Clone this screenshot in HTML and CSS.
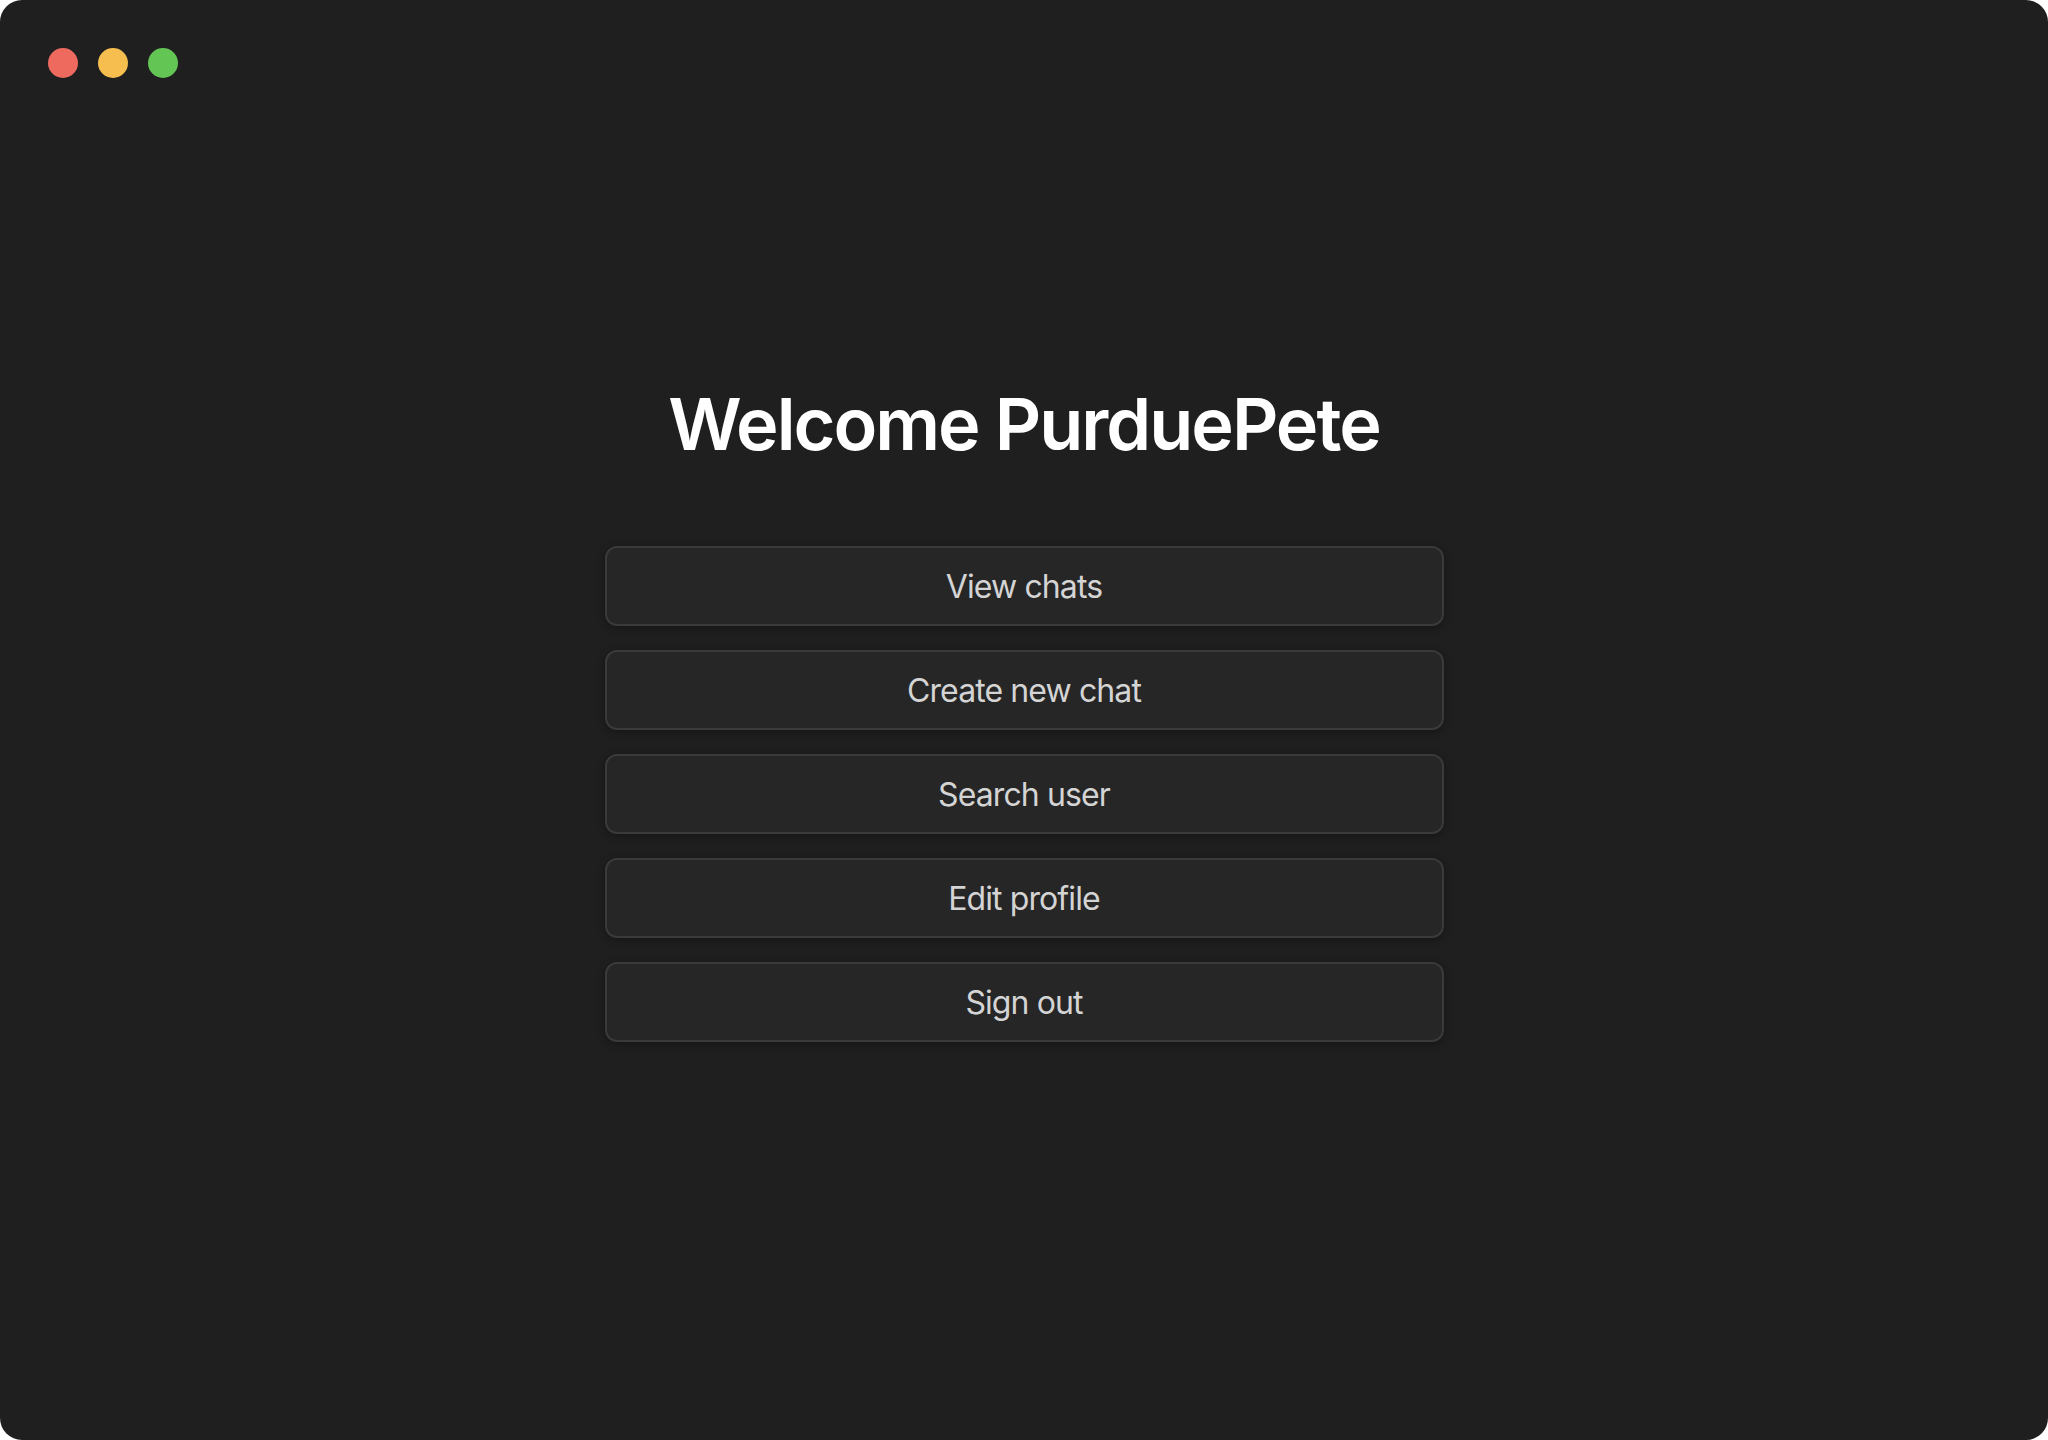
FILE: index.html
```html
<!DOCTYPE html>
<html>
<head>
<meta charset="utf-8">
<link rel="stylesheet" href="styles.css">
</head>
<body>
<div class="window">
  <div class="titlebar">
    <span class="light red"></span>
    <span class="light yellow"></span>
    <span class="light green"></span>
  </div>
  <main class="content">
    <h1 class="title">Welcome PurduePete</h1>
    <div class="menu">
      <button class="btn">View chats</button>
      <button class="btn">Create new chat</button>
      <button class="btn">Search user</button>
      <button class="btn">Edit profile</button>
      <button class="btn">Sign out</button>
    </div>
  </main>
</div>
</body>
</html>
```
FILE: styles.css
```css
html, body {
  margin: 0;
  padding: 0;
  background: #ffffff;
}
body {
  width: 2048px;
  height: 1440px;
  overflow: hidden;
  font-family: Inter, "Liberation Sans", sans-serif;
}
.window {
  width: 2048px;
  height: 1440px;
  background: #1f1f1f;
  border-radius: 22px;
  box-sizing: border-box;
  display: flex;
  flex-direction: column;
}
.titlebar {
  display: flex;
  gap: 20px;
  padding: 48px 0 0 48px;
  height: 30px;
}
.light {
  width: 30px;
  height: 30px;
  border-radius: 50%;
  display: block;
}
.red { background: #ee6a5f; }
.yellow { background: #f5be4f; }
.green { background: #62c554; }
.content {
  display: flex;
  flex-direction: column;
  align-items: center;
  padding-top: 302px;
}
.title {
  margin: 0;
  font-size: 72px;
  font-weight: 600;
  color: #ffffff;
  letter-spacing: -2px;
  line-height: 87px;
}
.menu {
  margin-top: 79px;
  display: flex;
  flex-direction: column;
  gap: 24px;
}
.btn {
  width: 839px;
  height: 80px;
  box-sizing: border-box;
  background: #262626;
  border: 2px solid #3a3a3a;
  border-radius: 12px;
  box-shadow: 0 2px 8px rgba(0,0,0,0.35);
  color: #d4d4d4;
  font-family: Inter, "Liberation Sans", sans-serif;
  font-size: 32px;
  font-weight: 400;
  letter-spacing: -0.9px;
  padding: 0;
}
```
